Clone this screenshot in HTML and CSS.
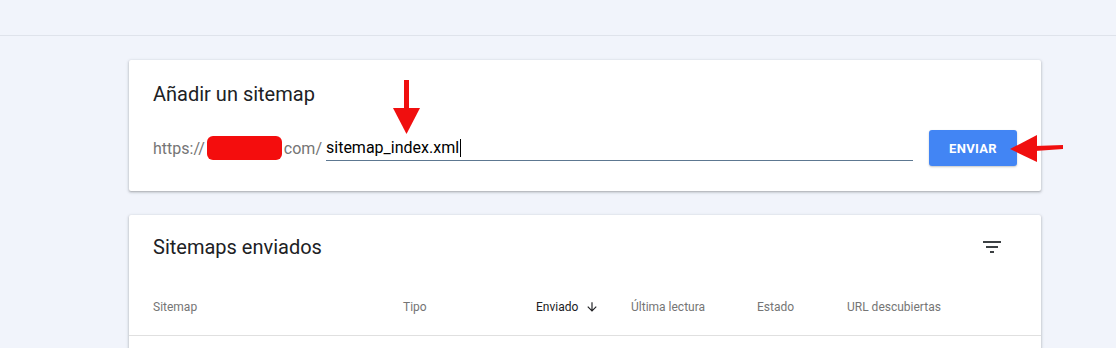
FILE: index.html
```html
<!DOCTYPE html>
<html lang="es">
<head>
<meta charset="UTF-8">
<meta name="viewport" content="width=device-width, initial-scale=1.0">
<title>Sitemaps</title>
<link rel="stylesheet" href="styles.css">
</head>
<body>

<header class="topbar"></header>

<main class="content">
  <!-- Add sitemap card -->
  <section class="card add-card">
    <h2 class="card-title">Añadir un sitemap</h2>
    <div class="add-row">
      <span class="prefix">https://</span>
      <span class="redacted"></span>
      <span class="prefix">com/</span>
      <div class="field">
        <span class="field-text">sitemap_index.xml</span><span class="caret"></span>
      </div>
      <button class="send-btn" type="button">ENVIAR</button>
    </div>

    <!-- annotation arrows -->
    <svg class="arrow-down" width="27" height="55" viewBox="0 0 27 55">
      <rect x="11" y="0" width="5" height="30" fill="#f00f0f"/>
      <polygon points="0,28 27,28 13.5,54" fill="#f00f0f"/>
    </svg>
    <svg class="arrow-left" width="54" height="28" viewBox="0 0 54 28">
      <polygon points="0,14 27,0 27,27" fill="#f00f0f"/>
      <polygon points="25,11 53,10 53,14 25,16" fill="#f00f0f"/>
    </svg>
  </section>

  <!-- Submitted sitemaps card -->
  <section class="card list-card">
    <div class="list-head">
      <h2 class="card-title">Sitemaps enviados</h2>
      <svg class="filter-icon" width="24" height="24" viewBox="0 0 24 24">
        <path d="M10 18h4v-2h-4v2zM3 6v2h18V6H3zm3 7h12v-2H6v2z" fill="#3c4043"/>
      </svg>
    </div>
    <div class="table-head">
      <span class="col">Sitemap</span>
      <span class="col">Tipo</span>
      <span class="col col-active">Enviado
        <svg width="14" height="14" viewBox="0 0 24 24"><path d="M20 12l-1.41-1.41L13 16.17V4h-2v12.17l-5.58-5.59L4 12l8 8 8-8z" fill="#202124"/></svg>
      </span>
      <span class="col">Última lectura</span>
      <span class="col">Estado</span>
      <span class="col">URL descubiertas</span>
    </div>
  </section>
</main>

</body>
</html>
```

FILE: styles.css
```css
body {
  margin: 0;
  background-color: #f1f4fb;
  font-family: Roboto, "Liberation Sans", Arial, sans-serif;
  color: #202124;
}
.topbar {
  height: 35px;
  border-bottom: 1px solid #dfe3eb;
}
.content {
  padding: 24px 0 0 129px;
  display: flex;
  flex-direction: column;
  gap: 24px;
}
.card {
  position: relative;
  width: 912px;
  background-color: #fff;
  border-radius: 2px;
  box-shadow: 0 1px 2px rgba(60, 64, 67, 0.3), 0 1px 3px 1px rgba(60, 64, 67, 0.12);
}
.card-title {
  margin: 0;
  font-size: 20px;
  font-weight: 400;
  line-height: 28px;
  color: #202124;
}
.add-card {
  padding: 20px 24px 25px 24px;
  box-sizing: border-box;
}
.add-row {
  display: flex;
  align-items: center;
  height: 36px;
  margin-top: 22px;
  font-size: 16px;
}
.prefix {
  color: #757575;
}
.redacted {
  display: inline-block;
  width: 75px;
  height: 24px;
  margin: 0 2px;
  background-color: #f40d0d;
  border-radius: 6px;
}
.field {
  flex: 1;
  display: flex;
  align-items: center;
  height: 24px;
  margin-left: 4px;
  border-bottom: 1px solid #5d7891;
  color: #000;
}
.caret {
  display: inline-block;
  width: 1px;
  height: 18px;
  margin-left: 1px;
  background-color: #000;
}
.send-btn {
  width: 88px;
  height: 36px;
  margin-left: 16px;
  border: none;
  border-radius: 3px;
  background-color: #4285f4;
  color: #fff;
  font-family: Roboto, "Liberation Sans", Arial, sans-serif;
  font-size: 13px;
  font-weight: 700;
  letter-spacing: 0.3px;
  box-shadow: 0 1px 2px rgba(60, 64, 67, 0.3);
}
.arrow-down {
  position: absolute;
  left: 264px;
  top: 20px;
}
.arrow-left {
  position: absolute;
  left: 881px;
  top: 75px;
}
.list-card {
  height: 200px;
}
.list-head {
  display: flex;
  align-items: center;
  justify-content: space-between;
  padding: 18px 37px 0 24px;
}
.table-head {
  display: grid;
  grid-template-columns: 250px 133px 95px 126px 90px 1fr;
  align-items: center;
  height: 56px;
  margin-top: 18px;
  padding-left: 24px;
  border-bottom: 1px solid #e0e0e0;
  font-size: 12px;
  color: #757575;
}
.col-active {
  display: flex;
  align-items: center;
  gap: 7px;
  color: #202124;
}
```
